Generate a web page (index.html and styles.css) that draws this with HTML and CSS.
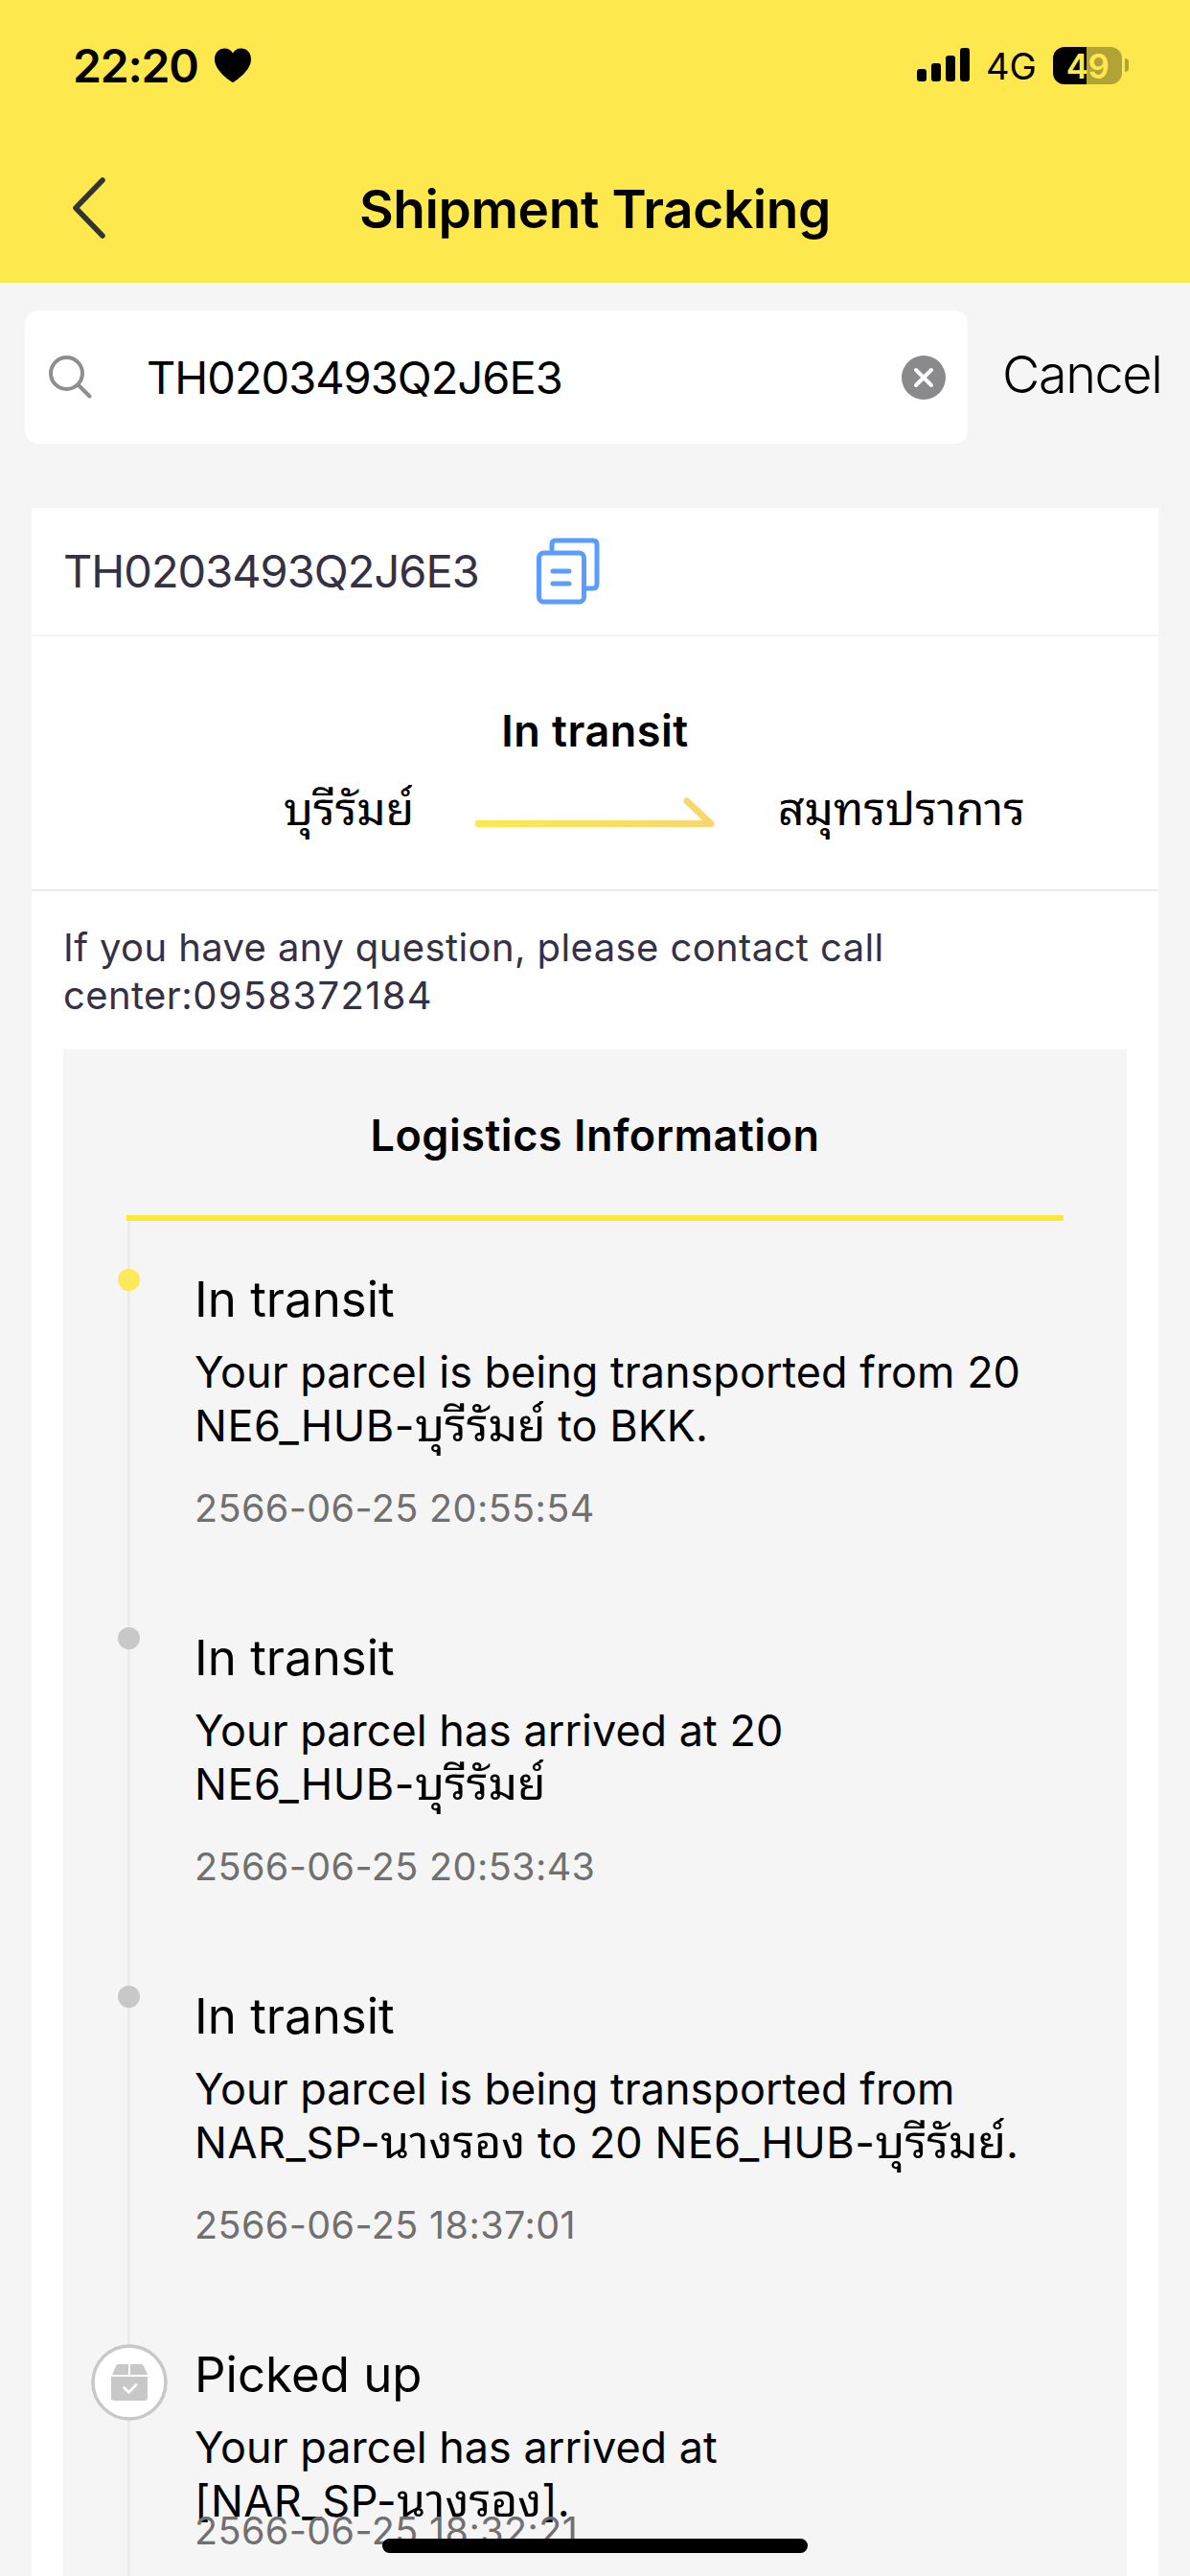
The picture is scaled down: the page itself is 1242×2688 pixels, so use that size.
FILE: index.html
```html
<!DOCTYPE html>
<html lang="en">
<head>
    <meta charset="UTF-8">
    <meta name="viewport" content="width=device-width, initial-scale=1.0">
    <title>Shipment Tracking</title>
    <link rel="stylesheet" href="styles.css">
</head>
<body>
    <header class="header">
        <div class="status-bar">
            <span class="time">22:20</span>
            <svg class="heart" width="38" height="36" viewBox="0 0 38 36">
                <path d="M19 36C17 35 0 24 0 12C0 5 4.500 0.500 10.500 0.500C14.500 0.500 17.500 2.500 19 5.500C20.500 2.500 23.500 0.500 27.500 0.500C33.500 0.500 38 5 38 12C38 24 21 35 19 36Z"/>
            </svg>
            <svg class="signal" width="55" height="36" viewBox="0 0 55 36">
                <rect x="0" y="22" width="10" height="13" rx="3"/>
                <rect x="15" y="16" width="10" height="19" rx="3"/>
                <rect x="30" y="8" width="10" height="27" rx="3"/>
                <rect x="45" y="0" width="10" height="35" rx="3"/>
            </svg>
            <span class="network">4G</span>
            <div class="battery">49</div>
            <div class="battery-cap"></div>
        </div>
        <div class="title-bar">
            <svg class="back" width="34" height="64" viewBox="0 0 34 64">
                <path d="M31 3L3 32L31 61"/>
            </svg>
            <h1>Shipment Tracking</h1>
        </div>
    </header>

    <div class="search">
        <div class="search-box">
            <svg width="46" height="46" viewBox="0 0 46 46">
                <circle cx="18.500" cy="18.500" r="16.500"/>
                <path d="M30.500 30.500L42.500 42.500"/>
            </svg>
            <span class="search-text">TH0203493Q2J6E3</span>
            <svg class="clear" width="46" height="46" viewBox="0 0 46 46">
                <circle cx="23" cy="23" r="23"/>
                <path d="M15 15L31 31M31 15L15 31"/>
            </svg>
        </div>
        <span class="cancel">Cancel</span>
    </div>

    <main class="card">
        <div class="number-row">
            <span class="number">TH0203493Q2J6E3</span>
            <svg class="copy" width="66" height="70" viewBox="0 0 66 70">
                <path d="M16 14V7Q16 3 20 3H59Q63 3 63 7V48Q63 53 59 53H52"/>
                <rect x="2.500" y="16" width="47" height="51" rx="5"/>
                <path d="M17 35H34M17 48H34"/>
            </svg>
        </div>

        <div class="route">
            <h2>In transit</h2>
            <div class="route-line">
                <span class="place from">บุรีรัมย์</span>
                <svg class="arrow" width="250" height="32" viewBox="0 0 250 32">
                    <defs>
                        <linearGradient id="arrowFill" gradientUnits="userSpaceOnUse" x1="0" y1="0" x2="250" y2="0">
                            <stop offset="0" stop-color="#fbe94f"/>
                            <stop offset="1" stop-color="#f8d670"/>
                        </linearGradient>
                    </defs>
                    <path d="M3 27.500H246L221 4" fill="none" stroke="url(#arrowFill)" stroke-width="7" stroke-linecap="round" stroke-linejoin="round"/>
                </svg>
                <span class="place to">สมุทรปราการ</span>
            </div>
        </div>

        <p class="contact">If you have any question, please contact call<br>center:<span class="phone">0958372184</span></p>

        <section class="logistics">
            <h2>Logistics Information</h2>
            <ul class="timeline">
                <li>
                    <div class="marker"><i class="dot active"></i></div>
                    <div class="info">
                        <h3>In transit</h3>
                        <p>Your parcel is being transported from 20<br><span class="code">NE6_HUB-</span><span class="th">บุรีรัมย์</span> to BKK.</p>
                        <time>2566-06-25 20:55:54</time>
                    </div>
                </li>
                <li>
                    <div class="marker"><i class="dot"></i></div>
                    <div class="info">
                        <h3>In transit</h3>
                        <p>Your parcel has arrived at 20<br><span class="code">NE6_HUB-</span><span class="th">บุรีรัมย์</span></p>
                        <time>2566-06-25 20:53:43</time>
                    </div>
                </li>
                <li>
                    <div class="marker"><i class="dot"></i></div>
                    <div class="info">
                        <h3>In transit</h3>
                        <p>Your parcel is being transported from<br><span class="code">NAR_SP-</span><span class="th">นางรอง</span> to 20 <span class="code">NE6_HUB-</span><span class="th">บุรีรัมย์</span>.</p>
                        <time>2566-06-25 18:37:01</time>
                    </div>
                </li>
                <li class="picked">
                    <div class="marker">
                        <svg width="80" height="80" viewBox="0 0 80 80">
                            <circle cx="40" cy="40" r="38" fill="#fff" stroke="#c8c8c8" stroke-width="3.500"/>
                            <path d="M28 21H39V32H22L26 23Q27 21 28 21ZM41 21H52Q54 21 55 23L59 32H41Z" fill="#c8c8c8"/>
                            <path d="M21 34H59V56Q59 59 56 59H24Q21 59 21 56Z" fill="#c8c8c8"/>
                            <path d="M34.500 45.500L39.500 50.500L47 42.500" fill="none" stroke="#fff" stroke-width="2.600" stroke-linecap="round"/>
                        </svg>
                    </div>
                    <div class="info">
                        <h3>Picked up</h3>
                        <p>Your parcel has arrived at<br><span class="code">[NAR_SP-</span><span class="th">นางรอง</span>].</p>
                        <time>2566-06-25 18:32:21</time>
                    </div>
                </li>
            </ul>
        </section>
    </main>

    <div class="home-bar"></div>
</body>
</html>
```

FILE: styles.css
```css
* {
    box-sizing: border-box;
    margin: 0;
    padding: 0;
}
body {
    position: relative;
    height: 2688px;
    overflow: hidden;
    background: #f5f5f5;
    color: #000;
    font-family: Inter, "Noto Sans Thai Looped", "Noto Sans Thai", "Noto Sans", sans-serif;
    white-space: nowrap;
}
svg {
    display: block;
    flex: none;
}
.header {
    height: 295px;
    background: #fde94d;
}
.status-bar {
    display: flex;
    align-items: center;
    height: 136px;
    padding: 0 64px 0 76px;
}
.time {
    width: 148px;
    font-size: 48px;
    font-weight: 600;
    letter-spacing: -1.2px;
}
.signal {
    margin-left: auto;
}
.network {
    width: 69px;
    padding-left: 17px;
    font-size: 38px;
    padding-top: 2px;
}
.network + .battery {
    margin-left: 18px;
}
.battery {
    width: 72px;
    height: 39px;
    margin-right: 3px;
    border-radius: 12px;
    background: linear-gradient(90deg, #000 35px, #b1a336 35px);
    color: #fde94d;
    font-size: 35px;
    font-weight: 600;
    line-height: 40px;
    letter-spacing: -0.5px;
    text-align: center;
}
.battery-cap {
    width: 4px;
    height: 14px;
    border-radius: 0 4px 4px 0;
    background: #b1a336;
}
.title-bar {
    display: flex;
    align-items: center;
    height: 161px;
    padding: 0 76px;
}
.back {
    fill: none;
    stroke: #333;
    stroke-width: 5.5;
    stroke-linecap: round;
    stroke-linejoin: round;
}
h1 {
    flex: 1;
    margin-right: 34px;
    padding-top: 3px;
    font-size: 55px;
    font-weight: 600;
    letter-spacing: -0.4px;
    text-align: center;
}
.search {
    display: flex;
    align-items: center;
    height: 139px;
    margin-top: 29px;
    padding-left: 26px;
}
.search-box {
    display: flex;
    align-items: center;
    width: 984px;
    height: 139px;
    padding: 0 23px 0 25px;
    border-radius: 14px;
    background: #fff;
}
.search-box svg {
    fill: none;
    stroke: #8e8e8e;
    stroke-width: 4;
    stroke-linecap: round;
}
.search-text {
    margin-left: 56px;
    font-size: 47px;
    letter-spacing: -1px;
}
.search-box .clear {
    margin-left: auto;
    fill: #8a8a8d;
    stroke: none;
}
.clear path {
    stroke: #fff;
}
.cancel {
    margin-left: 36px;
    padding-bottom: 6px;
    font-size: 54px;
    font-weight: 300;
    letter-spacing: -1.4px;
}
.card {
    width: 1176px;
    margin: 67px auto 0 33px;
    background: #fff;
}
.number-row {
    display: flex;
    align-items: center;
    height: 134px;
    padding-left: 33px;
    border-bottom: 2px solid #f5f5f5;
    color: #343145;
}
.number {
    width: 494px;
    padding-bottom: 2px;
    font-size: 47px;
    letter-spacing: -1px;
}
.copy {
    fill: none;
    stroke: #5b9dfa;
    stroke-width: 5;
    stroke-linecap: round;
}
.route {
    height: 266px;
    padding-top: 69px;
    border-bottom: 2px solid #ebebeb;
}
h2 {
    font-size: 45px;
    font-weight: 600;
    line-height: 60px;
    letter-spacing: 0.5px;
    text-align: center;
}
.route-line {
    display: flex;
    height: 80px;
    margin-top: 20px;
    padding-left: 263px;
}
.place {
    font-size: 48px;
    line-height: 62px;
}
.from {
    width: 200px;
}
.arrow {
    margin-top: 19px;
}
.to {
    margin-left: 66px;
}
.contact {
    height: 165px;
    padding: 34px 0 0 33px;
    color: #343145;
    font-size: 40px;
    line-height: 50px;
    letter-spacing: 0.4px;
}
.phone {
    letter-spacing: 1.3px;
}
.logistics {
    width: 1110px;
    height: 1600px;
    margin-left: 33px;
    background: #f5f5f5;
}
.logistics h2 {
    height: 179px;
    margin: 0 66px;
    padding-top: 60px;
    border-bottom: 6px solid #ffe833;
}
.timeline {
    height: 1420px;
    background: linear-gradient(#ebebeb, #ebebeb) 67px 0 / 3px 100% no-repeat;
    list-style: none;
}
.timeline li {
    display: flex;
    height: 374px;
}
.marker {
    display: flex;
    flex: none;
    justify-content: center;
    align-items: flex-start;
    width: 137px;
    padding-top: 50px;
}
.dot {
    width: 23px;
    height: 23px;
    border-radius: 50%;
    background: #c8c8c8;
}
.dot.active {
    background: #fbe95b;
}
.info {
    padding-top: 52px;
}
.info h3 {
    font-size: 51px;
    font-weight: 400;
    line-height: 60px;
}
.info p {
    margin: 18px 0 33px;
    font-size: 45px;
    line-height: 56px;
}
.code {
    letter-spacing: 0.5px;
}
/* Thai glyphs come out narrower than the latin ones */
.th {
    font-size: 1.07em;
    line-height: 1;
}
.info time {
    display: block;
    color: #707070;
    font-size: 39.5px;
    line-height: 50px;
    letter-spacing: 0.4px;
}
/* the date slides under the last line of the text here */
.picked .info p {
    margin-bottom: -22px;
}
.home-bar {
    position: absolute;
    left: 399px;
    bottom: 24px;
    width: 444px;
    height: 15px;
    border-radius: 8px;
    background: #000;
}
```
